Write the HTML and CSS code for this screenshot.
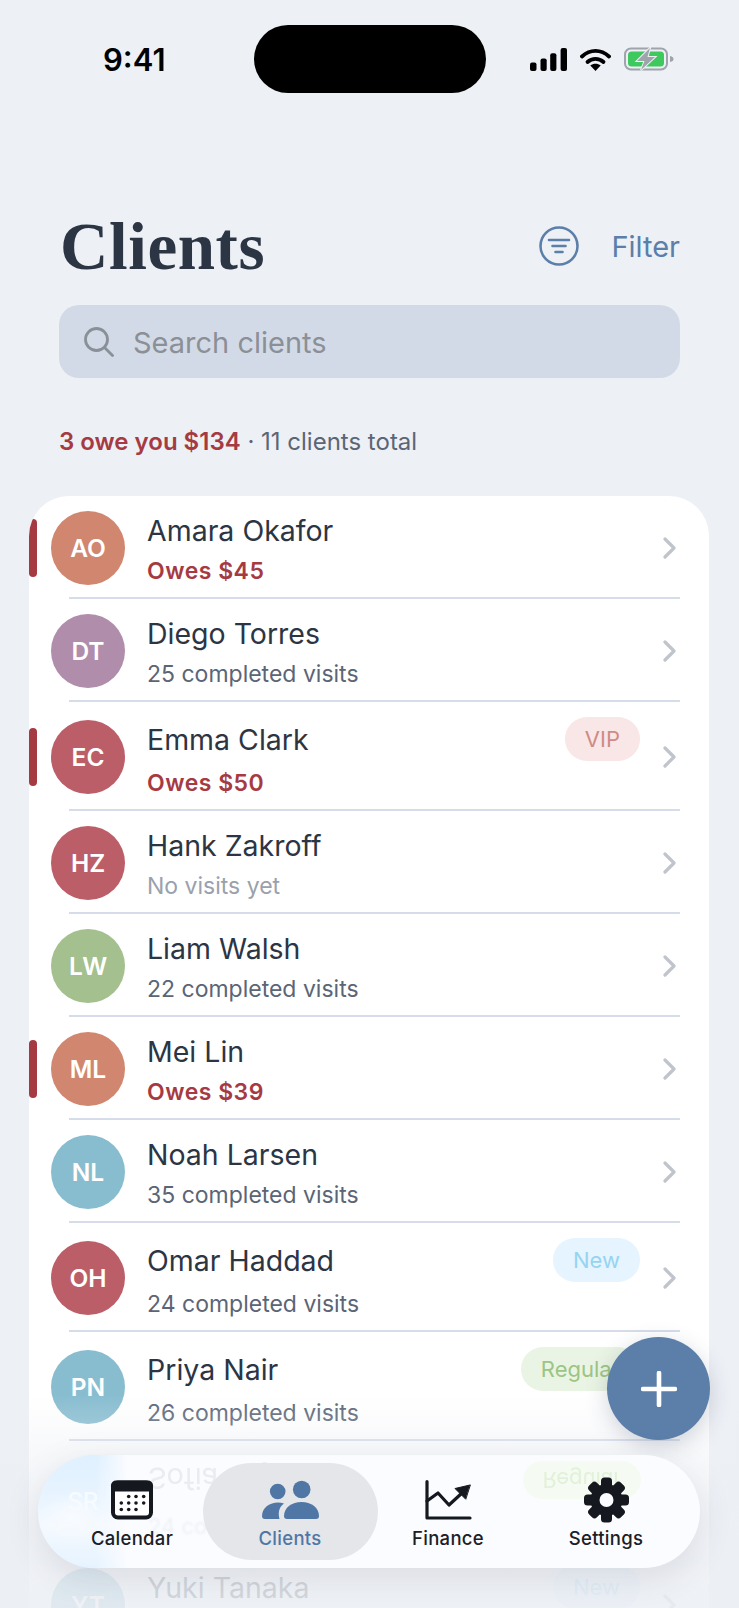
FILE: index.html
```html
<!DOCTYPE html>
<html lang="en">
<head>
  <meta charset="UTF-8">
  <meta name="viewport" content="width=device-width, initial-scale=1.0">
  <title>Clients</title>
  <link rel="stylesheet" href="styles.css">
</head>
<body>
  <svg class="sprites" width="0" height="0">
    <symbol id="chev" viewBox="0 0 13 22">
      <path d="M2 2 L11 11 L2 20" fill="none" stroke="currentColor" stroke-width="3.2" stroke-linecap="round" stroke-linejoin="round"/>
    </symbol>
  </svg>

  <div class="phone">
    <div class="island"></div>
    <div class="status">
      <span class="time">9:41</span>
      <div class="status-icons">
        <svg width="37" height="23" viewBox="0 0 37 23" fill="#000">
          <rect x="0" y="14.5" width="6.5" height="8.5" rx="2"/>
          <rect x="10.5" y="10.4" width="6.2" height="12.6" rx="2"/>
          <rect x="20.2" y="5.3" width="6.2" height="17.7" rx="2"/>
          <rect x="30.6" y="0" width="6.4" height="23" rx="2"/>
        </svg>
        <svg width="31" height="23" viewBox="0 0 31 23">
          <path d="M2 8.5 C10 1 21 1 29 8.5" fill="none" stroke="#000" stroke-width="3.8" stroke-linecap="round"/>
          <path d="M7.5 14 C12 9.8 19 9.8 23.5 14" fill="none" stroke="#000" stroke-width="3.8" stroke-linecap="round"/>
          <path d="M15.5 23 L10.3 17.6 C13.3 15.2 17.7 15.2 20.7 17.6 Z" fill="#000"/>
        </svg>
        <svg width="51" height="24" viewBox="0 0 51 24">
          <rect x="1" y="1.5" width="42" height="21" rx="6" fill="none" stroke="#9fa3ab" stroke-width="2"/>
          <rect x="4" y="4.5" width="36" height="15" rx="3.5" fill="#3dc95d"/>
          <path d="M46 9 C48.5 9.5 49.5 10.5 49.5 12 C49.5 13.5 48.5 14.5 46 15 Z" fill="#9fa3ab"/>
          <path d="M26 1 L13 14 H20.5 L17 23 L31 10 H23.5 Z" fill="#9fa3ab" stroke="#edf0f5" stroke-width="2" paint-order="stroke"/>
        </svg>
      </div>
    </div>

    <div class="header">
      <h1>Clients</h1>
      <div class="filter">
        <svg width="40" height="40" viewBox="0 0 40 40" fill="none" stroke="#5b7fa9" stroke-width="2.6" stroke-linecap="round">
          <circle cx="20" cy="20" r="18.5"/>
          <path d="M10 14 H30 M13.5 20 H26.5 M16.5 26 H23.5"/>
        </svg>
        <span>Filter</span>
      </div>
    </div>

    <div class="search">
      <svg width="30" height="30" viewBox="0 0 30 30" fill="none" stroke="#8a9098" stroke-width="2.8" stroke-linecap="round">
        <circle cx="12.5" cy="12.5" r="11"/>
        <path d="M20.5 20.5 L28.5 28.5"/>
      </svg>
      <span>Search clients</span>
    </div>

    <p class="summary"><b>3 owe you $134</b> · 11 clients total</p>

    <div class="card">
      <div class="row">
        <i class="owe-bar"></i>
        <div class="avatar terracotta">AO</div>
        <div class="info">
          <div class="name-line"><span class="name">Amara Okafor</span></div>
          <div class="sub owes">Owes $45</div>
        </div>
        <svg class="chev"><use href="#chev"/></svg>
      </div>
      <div class="sep"></div>

      <div class="row">
        <div class="avatar mauve">DT</div>
        <div class="info">
          <div class="name-line"><span class="name">Diego Torres</span></div>
          <div class="sub">25 completed visits</div>
        </div>
        <svg class="chev"><use href="#chev"/></svg>
      </div>
      <div class="sep"></div>

      <div class="row">
        <i class="owe-bar"></i>
        <div class="avatar rose">EC</div>
        <div class="info">
          <div class="name-line"><span class="name">Emma Clark</span><span class="badge vip">VIP</span></div>
          <div class="sub owes">Owes $50</div>
        </div>
        <svg class="chev"><use href="#chev"/></svg>
      </div>
      <div class="sep"></div>

      <div class="row">
        <div class="avatar rose">HZ</div>
        <div class="info">
          <div class="name-line"><span class="name">Hank Zakroff</span></div>
          <div class="sub none">No visits yet</div>
        </div>
        <svg class="chev"><use href="#chev"/></svg>
      </div>
      <div class="sep"></div>

      <div class="row">
        <div class="avatar sage">LW</div>
        <div class="info">
          <div class="name-line"><span class="name">Liam Walsh</span></div>
          <div class="sub">22 completed visits</div>
        </div>
        <svg class="chev"><use href="#chev"/></svg>
      </div>
      <div class="sep"></div>

      <div class="row">
        <i class="owe-bar"></i>
        <div class="avatar terracotta">ML</div>
        <div class="info">
          <div class="name-line"><span class="name">Mei Lin</span></div>
          <div class="sub owes">Owes $39</div>
        </div>
        <svg class="chev"><use href="#chev"/></svg>
      </div>
      <div class="sep"></div>

      <div class="row">
        <div class="avatar sky">NL</div>
        <div class="info">
          <div class="name-line"><span class="name">Noah Larsen</span></div>
          <div class="sub">35 completed visits</div>
        </div>
        <svg class="chev"><use href="#chev"/></svg>
      </div>
      <div class="sep"></div>

      <div class="row">
        <div class="avatar rose">OH</div>
        <div class="info">
          <div class="name-line"><span class="name">Omar Haddad</span><span class="badge new">New</span></div>
          <div class="sub">24 completed visits</div>
        </div>
        <svg class="chev"><use href="#chev"/></svg>
      </div>
      <div class="sep"></div>

      <div class="row">
        <div class="avatar sky">PN</div>
        <div class="info">
          <div class="name-line"><span class="name">Priya Nair</span><span class="badge regular">Regular</span></div>
          <div class="sub">26 completed visits</div>
        </div>
        <svg class="chev"><use href="#chev"/></svg>
      </div>
      <div class="sep"></div>

      <div class="row">
        <div class="avatar sky">SR</div>
        <div class="info">
          <div class="name-line"><span class="name">Sofia Reyes</span><span class="badge regular">Regular</span></div>
          <div class="sub">24 completed visits</div>
        </div>
        <svg class="chev"><use href="#chev"/></svg>
      </div>
      <div class="sep"></div>

      <div class="row">
        <div class="avatar sky">YT</div>
        <div class="info">
          <div class="name-line"><span class="name">Yuki Tanaka</span><span class="badge new">New</span></div>
          <div class="sub">18 completed visits</div>
        </div>
        <svg class="chev"><use href="#chev"/></svg>
      </div>
    </div>

    <div class="fade"></div>

    <button class="fab" type="button">
      <svg width="36" height="36" viewBox="0 0 36 36" stroke="#fff" stroke-width="4.6" stroke-linecap="round">
        <path d="M18 2 V34 M2 18 H34"/>
      </svg>
    </button>

    <nav class="tabbar">
      <div class="ghost ghost-blob"><span>SR</span></div>
      <span class="ghost ghost-name">Sofia Reyes</span>
      <span class="ghost ghost-sub">24 co</span>
      <span class="ghost ghost-badge">Regular</span>

      <a class="tab">
        <svg class="tab-icon" width="42" height="39" viewBox="0 0 42 39" fill="#15191f">
          <rect x="2" y="2" width="38" height="35" rx="5" fill="#fff" stroke="#15191f" stroke-width="4"/>
          <path d="M5 0 H37 A5 5 0 0 1 42 5 V11 H0 V5 A5 5 0 0 1 5 0 Z"/>
          <circle cx="17.7" cy="16" r="1.8"/><circle cx="25" cy="16" r="1.8"/><circle cx="32.7" cy="16" r="1.8"/>
          <circle cx="10.3" cy="22.5" r="1.8"/><circle cx="17.7" cy="22.5" r="1.8"/><circle cx="25" cy="22.5" r="1.8"/><circle cx="32.7" cy="22.5" r="1.8"/>
          <circle cx="10.3" cy="29" r="1.8"/><circle cx="17.7" cy="29" r="1.8"/><circle cx="25" cy="29" r="1.8"/>
        </svg>
        <span>Calendar</span>
      </a>
      <a class="tab active">
        <svg class="tab-icon" width="57" height="39" viewBox="0 0 57 39" fill="#5076a6">
          <circle cx="15.7" cy="11" r="7.8"/>
          <circle cx="39.7" cy="9" r="8.8"/>
          <path d="M22 35.5 C22 27 30 21.5 39.5 21.5 C49 21.5 57 27 57 35.5 Q57 38.5 54 38.5 H25 Q22 38.5 22 35.5 Z"/>
          <path d="M0 35.5 C0 27 8 22 16 22 C18 22 20 22.4 22 23 C18 26 15.5 30.5 17.5 38.5 H3 Q0 38.5 0 35.5 Z"/>
        </svg>
        <span>Clients</span>
      </a>
      <a class="tab">
        <svg class="tab-icon" width="46" height="40" viewBox="0 0 46 40" fill="none" stroke="#15191f" stroke-width="3.2" stroke-linejoin="round" stroke-linecap="round">
          <path d="M2 1.5 V38 H45"/>
          <path d="M2 21 L13 13 L24 25 L37 13"/>
          <path d="M45 5 L30 8.5 L40.5 19 Z" fill="#15191f" stroke-width="1"/>
        </svg>
        <span>Finance</span>
      </a>
      <a class="tab">
        <svg class="tab-icon" width="45" height="45" viewBox="0 0 45 45" fill="#15191f">
          <circle cx="22.5" cy="22.5" r="16"/>
          <g>
            <rect x="17" y="0" width="11" height="45" rx="3.5"/>
            <rect x="17" y="0" width="11" height="45" rx="3.5" transform="rotate(45 22.5 22.5)"/>
            <rect x="17" y="0" width="11" height="45" rx="3.5" transform="rotate(90 22.5 22.5)"/>
            <rect x="17" y="0" width="11" height="45" rx="3.5" transform="rotate(135 22.5 22.5)"/>
          </g>
          <circle cx="22.5" cy="22.5" r="7" fill="#fbfcff"/>
        </svg>
        <span>Settings</span>
      </a>
    </nav>
  </div>
</body>
</html>
```

FILE: styles.css
```css
* { box-sizing: border-box; }
html, body { margin: 0; padding: 0; }
body {
  font-family: 'Inter', 'Liberation Sans', sans-serif;
  background: #edf0f5;
  color: #2c3544;
}
.sprites { position: absolute; }
.phone { position: relative; width: 739px; height: 1608px; overflow: hidden; }

/* status bar */
.island {
  position: absolute; left: 254px; top: 25px; width: 232px; height: 68px;
  background: #000; border-radius: 34px / 34px;
}
.status {
  height: 122px; padding: 46px 64px 0 103px;
  display: flex; justify-content: space-between; align-items: flex-start;
}
.time { font-size: 31px; line-height: 28px; font-weight: 600; color: #000; }
.status-icons { display: flex; gap: 13px; align-items: center; margin-top: 1px; }

/* header */
.header {
  margin: 94px 59px 0 60px; height: 60px;
  display: flex; justify-content: space-between; align-items: center;
}
h1 {
  margin: 0; font-family: 'Liberation Serif', serif; font-size: 67px; font-weight: 700;
  line-height: 60px; color: #2c3544; letter-spacing: .6px;
}
.filter { display: flex; align-items: center; gap: 32px; color: #5b7fa9; font-size: 29px; }
.filter svg { display: block; }

.search {
  margin: 29px 59px 0; height: 73px; border-radius: 20px; background: #d3dae7;
  padding: 1px 25px 0; display: flex; align-items: center; gap: 19px;
  color: #8b9097; font-size: 29px;
}
.search svg { flex: none; margin-top: -1px; }

.summary { margin: 49px 59px 0; font-size: 24px; line-height: 30px; color: #5b6575; }
.summary b { font-weight: 600; color: #a63a43; }

/* client list */
.card {
  margin: 39px 30px 0 29px; background: #fff; border-radius: 40px 40px 0 0;
  overflow: hidden; height: 1200px;
}
.row {
  position: relative; display: flex; align-items: center;
  padding: 15px 33px 12px 22px;
}
.owe-bar {
  position: absolute; left: 0; top: 50%; margin-top: -28px;
  width: 8px; height: 58px; border-radius: 4px; background: #a63a43;
}
.avatar {
  flex: none; width: 74px; height: 74px; border-radius: 50%;
  display: flex; align-items: center; justify-content: center;
  color: #fff; font-size: 24.5px; font-weight: 600;
}
.terracotta { background: #d1866f; }
.mauve { background: #b08dab; }
.rose { background: #bc5e68; }
.sage { background: #a3c08e; }
.sky { background: #88bdd0; }

.info { flex: 1; min-width: 0; margin: 0 23px 0 22px; }
.name-line { display: flex; justify-content: space-between; align-items: center; min-height: 38px; }
.name { font-size: 28.5px; line-height: 36px; padding-top: 2px; color: #2c3544; }
.sub {
  font-size: 23px; line-height: 36px; color: #5b6575;
  margin-top: 4px; margin-bottom: -4px;
}
.sub.owes { color: #a63a43; font-weight: 600; letter-spacing: .5px; }
.sub.none { color: #9aa1ac; }

.badge {
  height: 44px; border-radius: 22px; padding: 0 20px;
  font-size: 22px; line-height: 44px;
}
.vip { background: #f9e6e6; color: #cf8b85; }
.new { background: #e5f4fe; color: #96d4f2; }
.regular { background: #eaf4e4; color: #9cc583; }

.chev { flex: none; width: 13px; height: 22px; color: #c0c4cc; }
.sep { height: 2px; margin: 0 29px 0 40px; background: #d6dce9; }

/* bottom fade over the list */
.fade {
  position: absolute; left: 0; right: 0; top: 1395px; bottom: 0;
  background: linear-gradient(to bottom,
    rgba(236,239,244,0) 0, rgba(236,239,244,.35) 50px,
    rgba(236,239,244,.83) 170px, rgba(236,239,244,.88) 213px);
}

.fab {
  position: absolute; left: 607px; top: 1337px; width: 103px; height: 103px;
  border: none; border-radius: 50%; background: #5b7fa9; padding: 0;
  display: flex; align-items: center; justify-content: center;
  box-shadow: 0 6px 22px rgba(50,65,90,.22);
}

/* tab bar */
.tabbar {
  position: absolute; left: 38px; top: 1455px; width: 662px; height: 113px;
  border-radius: 57px; background: #fbfcff; overflow: hidden;
  padding: 8px 15px;
  display: grid; grid-template-columns: repeat(4, 158px);
}
.phone::after {
  content: ""; position: absolute; left: 38px; top: 1455px; width: 662px; height: 113px;
  border-radius: 57px; box-shadow: 0 8px 34px rgba(60,70,90,.13); pointer-events: none;
}
.tab {
  position: relative; display: flex; flex-direction: column; align-items: center;
  height: 97px; padding-top: 14px;
  font-size: 18.5px; font-weight: 500; line-height: 24px; color: #1b2027; letter-spacing: .3px;
}
.tab-icon { height: 46px; overflow: visible; }
.tab span { margin-top: 3px; }
.tab.active {
  margin: 0 -8.5px; border-radius: 49px; background: #e4e6ea; color: #5076a6;
}

/* list showing through the glass */
.ghost { position: absolute; }
.ghost-blob {
  left: 0; top: 0; width: 90px; height: 113px;
  background:
    radial-gradient(ellipse 34px 24px at 34px 62px, #f8fbff 0, rgba(248,251,255,0) 100%),
    linear-gradient(to bottom, #dff0ff 0, #e8f4ff 38%, #f4f9ff 62%, #e6f3ff 100%);
  -webkit-mask-image: linear-gradient(to right, #000 65%, transparent 100%);
  color: #f7fbff; font-size: 24px; font-weight: 500;
  display: flex; align-items: center; justify-content: center;
  padding-bottom: 20px;
}
.ghost-name {
  left: 110px; top: 4px; font-size: 29px; line-height: 38px; color: #eaecf1;
  transform: scaleY(-1); filter: blur(.6px);
}
.ghost-sub { left: 110px; top: 56px; font-size: 22px; line-height: 30px; color: #eef1f5; filter: blur(1px); }
.ghost-badge {
  left: 485px; top: 6px; width: 118px; height: 38px; border-radius: 19px;
  background: #f5fbf2; color: #e2f1d9; font-size: 22px; line-height: 38px; text-align: center;
  transform: scaleY(-1);
}
```
